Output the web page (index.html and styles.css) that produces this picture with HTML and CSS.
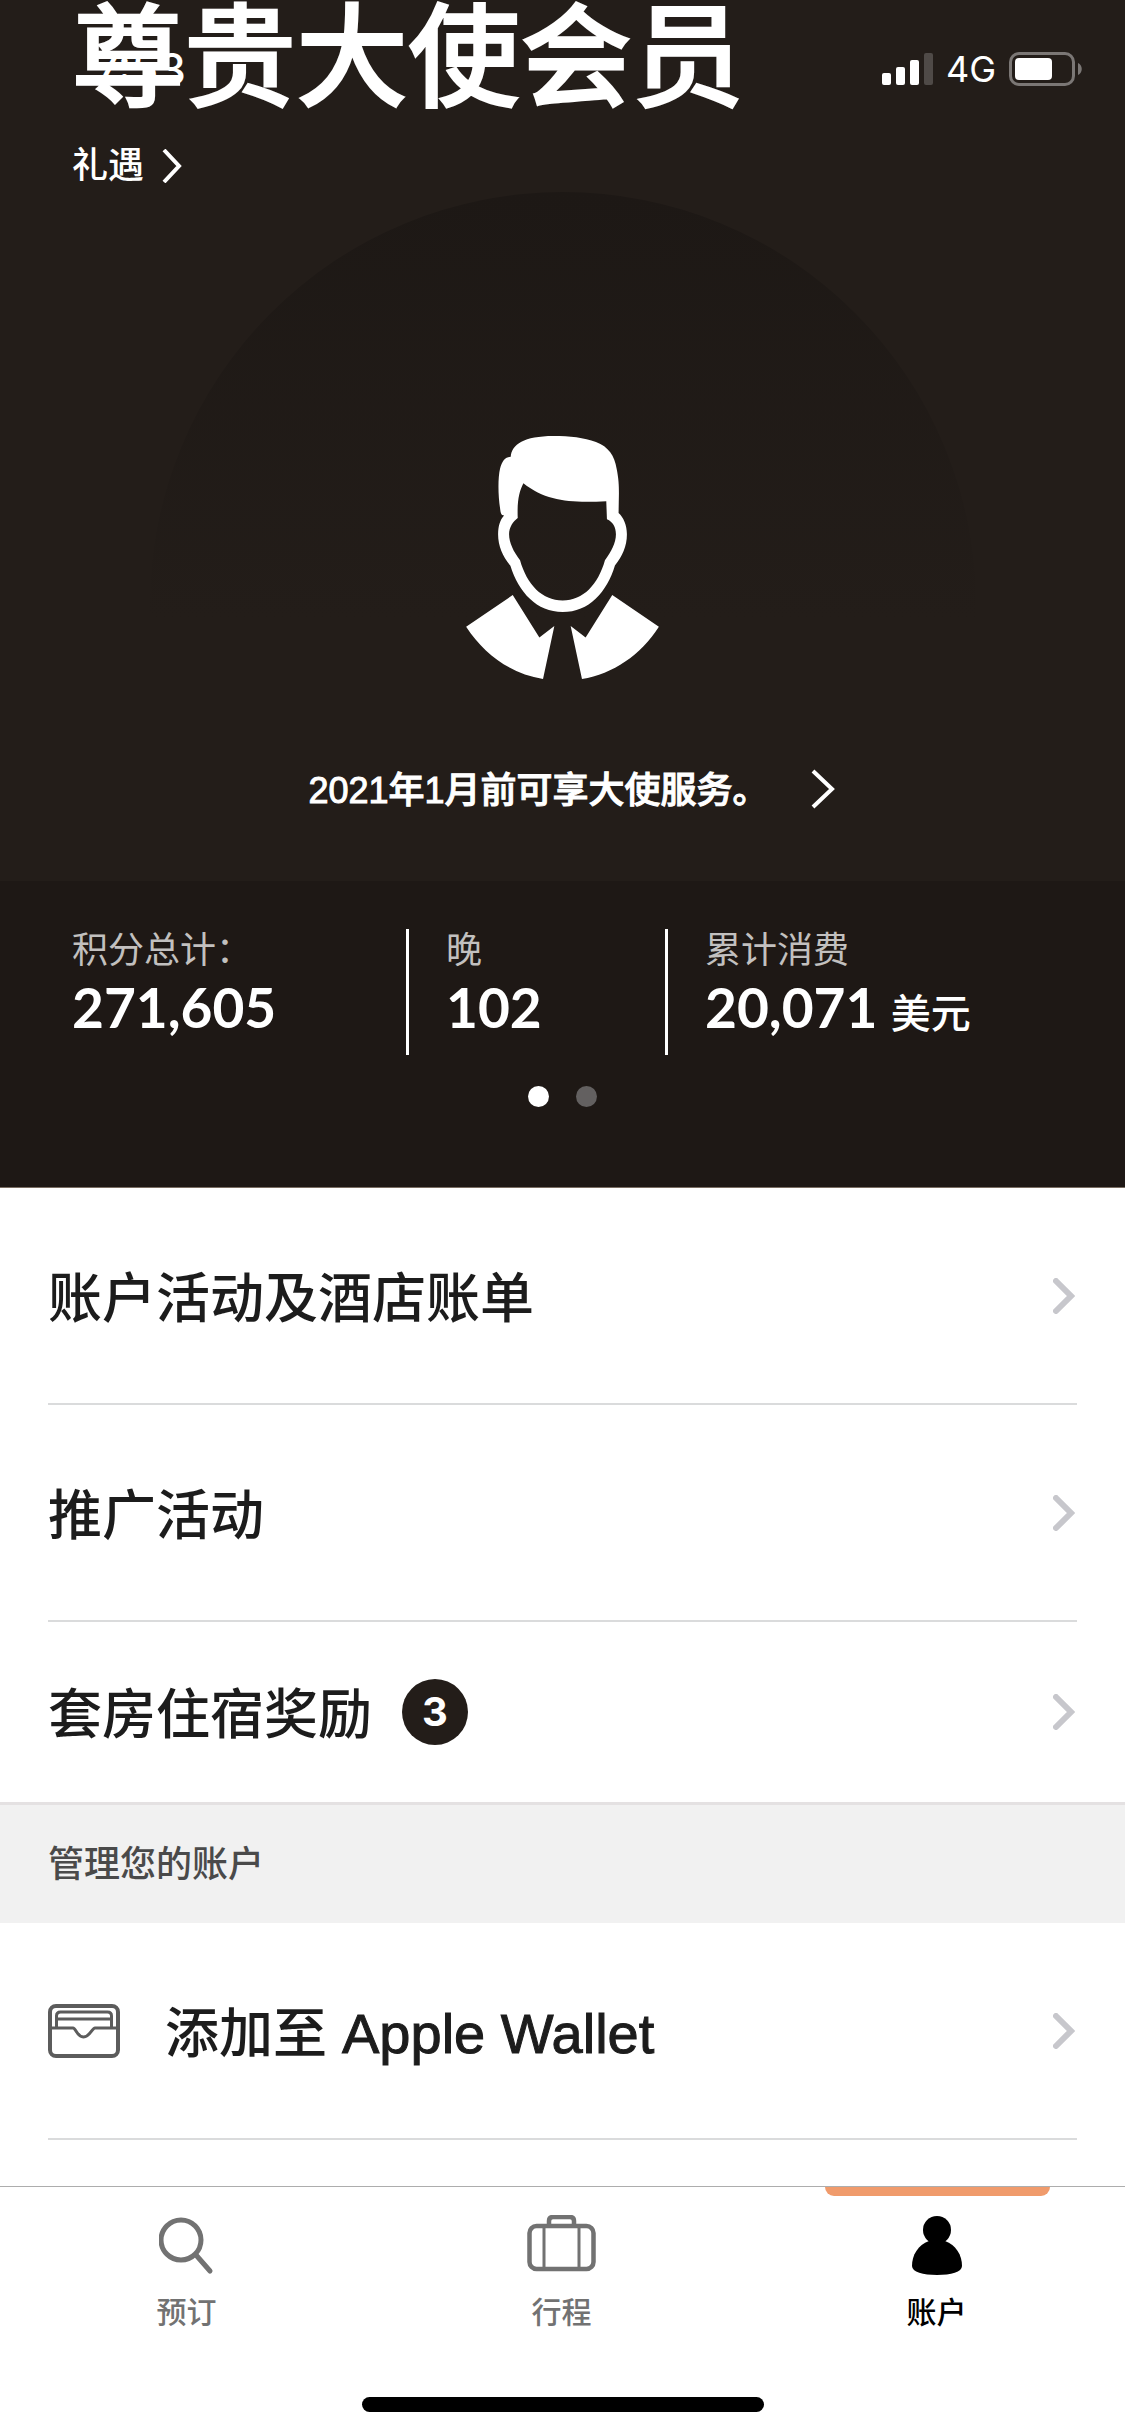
FILE: index.html
```html
<!DOCTYPE html>
<html lang="zh-CN">
<head>
<meta charset="utf-8">
<meta name="viewport" content="width=device-width, initial-scale=1">
<title>账户</title>
<link rel="stylesheet" href="styles.css">
</head>
<body>
<div class="status-bar">
  <span class="clock">7:53</span>
  <div class="status-icons">
    <svg class="signal" width="51" height="32" viewBox="0 0 51 32" aria-hidden="true">
      <rect x="0" y="20" width="9" height="12" rx="2" fill="#fff"/>
      <rect x="14" y="14" width="9" height="18" rx="2" fill="#fff"/>
      <rect x="28" y="7" width="9" height="25" rx="2" fill="#fff"/>
      <rect x="42" y="0" width="9" height="32" rx="2" fill="#4f4a47"/>
    </svg>
    <span class="network">4G</span>
    <svg class="battery" width="73" height="34" viewBox="0 0 73 34" aria-hidden="true">
      <rect x="1.5" y="1.5" width="63" height="31" rx="8.5" fill="none" stroke="#7b7775" stroke-width="3"/>
      <rect x="6" y="6" width="37" height="22" rx="4" fill="#fff"/>
      <path d="M69 11c5 2 5 10 0 12z" fill="#7b7775"/>
    </svg>
  </div>
</div>

<main class="content">
  <section class="hero">
    <h1 class="tier">尊贵大使会员</h1>
    <a class="benefits" href="#benefits">礼遇
      <svg width="20" height="34" viewBox="0 0 20 34" aria-hidden="true"><path d="M2 1l15 16L2 33" fill="none" stroke="#fff" stroke-width="4"/></svg>
    </a>
    <div class="dome">
      <svg class="avatar" width="193" height="243" viewBox="138 107 579 730" role="img" aria-label="头像">
        <path fill="#fff" fill-rule="evenodd" d="M252 346C243 345 242 340 240 325C234 285 233 235 240 205C246 181 256 170 272 169C275 133 312 107 400 107C450 107 492 112 528 125C566 139 584 167 590 205C596 235 597 255 597 280L596 338C611 352 621 374 621 402C621 438 607 468 585 496C561 576 507 636 428 636C350 636 296 577 271 497C248 468 234 438 234 402C234 378 240 359 252 346ZM310 249C297 274 291 303 293 353C279 364 267 380 267 402C267 428 281 455 300 480C320 552 366 601 428 601C490 601 535 552 555 480C574 454 588 428 588 402C588 380 579 365 561 357L559 303C455 308 381 305 310 249Z"/>
        <path fill="#fff" d="M278 585L358 712L403 678L369 837C275 822 193 765 138 680ZM577 585L497 712L452 678L486 837C580 822 662 765 717 680Z"/>
      </svg>
      <a class="service" href="#service"><span class="service-text">2021年1月前可享大使服务。</span>
        <svg width="24" height="40" viewBox="0 0 24 40" aria-hidden="true"><path d="M2 2l19 18L2 38" fill="none" stroke="#fff" stroke-width="4"/></svg>
      </a>
    </div>
  </section>

  <section class="summary">
    <dl class="stats">
      <div class="stat"><dt>积分总计：</dt><dd>271,605</dd></div>
      <div class="stat"><dt>晚</dt><dd>102</dd></div>
      <div class="stat"><dt>累计消费</dt><dd>20,071 <span class="unit">美元</span></dd></div>
    </dl>
    <div class="dots">
      <button class="dot dot-active" type="button" aria-label="第 1 页"></button>
      <button class="dot" type="button" aria-label="第 2 页"></button>
    </div>
  </section>

  <nav class="menu" aria-label="账户菜单">
    <a class="row" href="#activity"><span class="row-text">账户活动及酒店账单</span>
      <svg class="chevron" width="22" height="36" viewBox="0 0 22 36" aria-hidden="true"><path d="M3 3l15 15L3 33"/></svg></a>
    <a class="row" href="#promotions"><span class="row-text">推广活动</span>
      <svg class="chevron" width="22" height="36" viewBox="0 0 22 36" aria-hidden="true"><path d="M3 3l15 15L3 33"/></svg></a>
    <a class="row row-short" href="#suites"><span class="row-text">套房住宿奖励</span><span class="badge">3</span>
      <svg class="chevron" width="22" height="36" viewBox="0 0 22 36" aria-hidden="true"><path d="M3 3l15 15L3 33"/></svg></a>
  </nav>

  <h2 class="section-title">管理您的账户</h2>

  <nav class="menu" aria-label="管理您的账户">
    <a class="row" href="#wallet">
      <svg class="wallet" width="72" height="54" viewBox="0 0 72 54" fill="none" stroke="#5c5c5c" stroke-width="4" aria-hidden="true">
        <rect x="2" y="2" width="68" height="50" rx="6"/>
        <path stroke-width="3" d="M8.500 24V12q0-4 4-4h47q4 0 4 4v12M9 15h54M2 24h23c3 0 4 9 10.500 9S44 24 47 24h23"/>
      </svg>
      <span class="row-text">添加至 <span class="latin">Apple Wallet</span></span>
      <svg class="chevron" width="22" height="36" viewBox="0 0 22 36" aria-hidden="true"><path d="M3 3l15 15L3 33"/></svg></a>
  </nav>
</main>

<footer class="dock">
  <nav class="tabs" aria-label="主导航">
    <a class="tab" href="#book">
      <svg width="56" height="60" viewBox="0 0 56 60" fill="none" stroke="#727272" stroke-width="5" stroke-linecap="round" aria-hidden="true"><circle cx="22" cy="25" r="20"/><path d="M37 40l14 16"/></svg>
      <span>预订</span></a>
    <a class="tab" href="#trips">
      <svg width="70" height="60" viewBox="0 0 70 60" fill="none" stroke="#727272" stroke-width="4.500" aria-hidden="true"><rect x="2.500" y="11" width="64" height="43" rx="7"/><path d="M22 11V6q0-4 4-4h17q4 0 4 4v5"/><path d="M17 11v43M52 11v43" stroke-width="3"/></svg>
      <span>行程</span></a>
    <a class="tab tab-active" href="#account" aria-current="page">
      <svg width="50" height="60" viewBox="0 0 50 60" aria-hidden="true"><circle cx="25" cy="15" r="14"/><path d="M17 26C6 30 0 40 0 51C0 57 11 60 25 60S50 57 50 51C50 40 44 30 33 26Z"/></svg>
      <span>账户</span></a>
  </nav>
  <div class="home-indicator"></div>
</footer>
</body>
</html>
```
FILE: styles.css
```css
* { box-sizing: border-box; }

body {
  margin: 0;
  min-height: 100vh;
  display: flex;
  flex-direction: column;
  position: relative;
  background: #fff;
  color: #1c1c1c;
  font-family: "Liberation Sans", "Noto Sans CJK SC", sans-serif;
  font-weight: 500;
}

a { color: inherit; text-decoration: none; }
svg { display: block; flex: none; }

/* Phone status bar, floating over the scrolled header */
.status-bar {
  position: absolute;
  top: 44px;
  left: 0;
  right: 0;
  height: 50px;
  padding: 0 43px 0 94px;
  display: flex;
  align-items: center;
  justify-content: space-between;
  color: #fff;
  font-family: Inter, sans-serif;
}
.clock { font-size: 44px; line-height: 50px; }
.status-icons { display: flex; align-items: center; gap: 13px; }
.network { font-size: 36px; line-height: 36px; font-weight: 400; }

.content { flex: 1; }

.hero {
  display: flex;
  flex-direction: column;
  background: #231d19;
  color: #fff;
}
.tier {
  margin: 0;
  padding: 2px 72px 0;
  font-size: 112px;
  line-height: 116px;
  font-weight: 500;
  -webkit-text-stroke: 2px #fff;
}
.benefits {
  display: flex;
  align-items: center;
  gap: 18px;
  margin-top: 22px;
  padding: 0 72px;
  font-size: 36px;
  line-height: 52px;
}
.dome {
  align-self: center;
  width: 826px;
  max-width: 100%;
  padding: 244px 0 60px;
  border-radius: 413px 413px 0 0;
  background: linear-gradient(#1d1815, #231d19 62%);
  display: flex;
  flex-direction: column;
  align-items: center;
}
.service {
  display: flex;
  align-items: center;
  gap: 42px;
  margin-top: 78px;
  padding-left: 18px;
  font-size: 36px;
  line-height: 60px;
}
.service-text { padding-top: 4px; -webkit-text-stroke: 1px #fff; }

.summary {
  background: #1e1815;
  color: #fff;
  padding: 48px 0 80px;
  border-bottom: 1px solid #7a6d62;
}
.stats {
  display: grid;
  grid-template-columns: 406fr 259fr 460fr;
  margin: 0;
}
.stat { min-height: 126px; padding-left: 37px; border-left: 3px solid #fff; }
.stat:first-child { padding-left: 72px; border-left: 0; }
.stat dt { font-size: 36px; line-height: 44px; font-weight: 400; color: #c2c0bf; }
.stat dd {
  margin: 0;
  font-family: Lato, "Noto Sans CJK SC", sans-serif;
  font-size: 55px;
  line-height: 68px;
  font-weight: 700;
}
.stat .unit { font-size: 40px; font-weight: 500; line-height: 40px; }
.dots { display: flex; justify-content: center; gap: 27px; margin-top: 31px; }
.dot { width: 21px; height: 21px; padding: 0; border: 0; border-radius: 50%; background: #636060; }
.dot-active { background: #fff; }

.menu { padding: 0 48px; }
.row {
  display: flex;
  align-items: center;
  height: 217px;
  border-bottom: 2px solid #dadbdc;
  font-size: 54px;
  line-height: 64px;
}
.row-short { height: 180px; border-bottom: 0; }
.row-text { padding-top: 6px; }
.chevron { margin-left: auto; margin-right: 2px; fill: none; stroke: #c7c7cc; stroke-width: 6; stroke-linecap: round; }
.badge {
  width: 66px;
  height: 66px;
  margin-left: 30px;
  border-radius: 50%;
  background: #231d19;
  color: #fff;
  font: 700 40px/66px Inter, sans-serif;
  text-align: center;
}
.section-title {
  margin: 0;
  padding: 2px 48px 0;
  border-top: 3px solid #e4e1e2;
  background: #f1f1f1;
  color: #4a4a4a;
  font-size: 36px;
  line-height: 116px;
  font-weight: 500;
}
.wallet { margin-right: 45px; }
.latin { font-size: 56px; -webkit-text-stroke: 1px #1c1c1c; }

.dock { border-top: 1px solid #adadad; background: #fff; }
.tabs { display: grid; grid-template-columns: repeat(3, 1fr); }
.tab {
  position: relative;
  display: flex;
  flex-direction: column;
  align-items: center;
  gap: 16px;
  padding: 28px 2px 0 0;
  color: #727272;
  font-size: 30px;
  line-height: 44px;
}
.tab-active { color: #000; }
.tab-active::before {
  content: "";
  position: absolute;
  top: 0;
  left: 20%;
  right: 20%;
  height: 9px;
  border-radius: 0 0 9px 9px;
  background: #f09b6c;
}
.home-indicator {
  width: 402px;
  height: 15px;
  margin: 62px auto 24px;
  border-radius: 8px;
  background: #000;
}
```
